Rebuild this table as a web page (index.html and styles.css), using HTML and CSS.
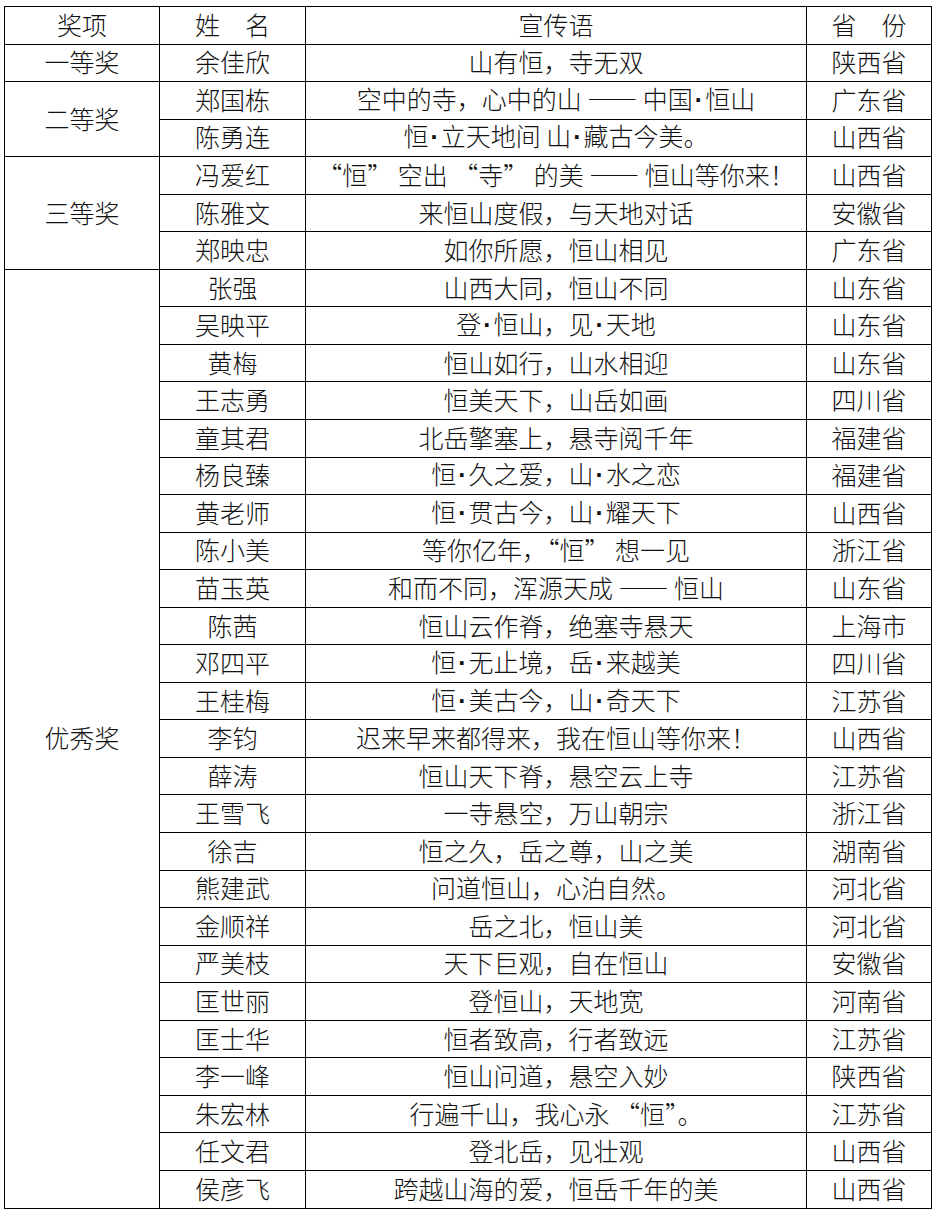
FILE: index.html
```html
<!DOCTYPE html>
<html lang="zh-CN">
<head>
<meta charset="utf-8">
<title>获奖名单</title>
<link rel="stylesheet" href="styles.css">
</head>
<body>
<table class="awards">
  <colgroup>
    <col class="c-award">
    <col class="c-name">
    <col class="c-slogan">
    <col class="c-prov">
  </colgroup>
  <tr><td>奖项</td><td>姓　名</td><td>宣传语</td><td>省　份</td></tr>
  <tr><td>一等奖</td><td>余佳欣</td><td>山有恒，寺无双</td><td>陕西省</td></tr>
  <tr><td rowspan="2">二等奖</td><td>郑国栋</td><td>空中的寺，心中的山 —— 中国<span class="dot">·</span>恒山</td><td>广东省</td></tr>
  <tr><td>陈勇连</td><td>恒<span class="dot">·</span>立天地间 山<span class="dot">·</span>藏古今美。</td><td>山西省</td></tr>
  <tr><td rowspan="3">三等奖</td><td>冯爱红</td><td>“恒” 空出 “寺” 的美 —— 恒山等你来！</td><td>山西省</td></tr>
  <tr><td>陈雅文</td><td>来恒山度假，与天地对话</td><td>安徽省</td></tr>
  <tr><td>郑映忠</td><td>如你所愿，恒山相见</td><td>广东省</td></tr>
  <tr><td rowspan="25">优秀奖</td><td>张强</td><td>山西大同，恒山不同</td><td>山东省</td></tr>
  <tr><td>吴映平</td><td>登<span class="dot">·</span>恒山，见<span class="dot">·</span>天地</td><td>山东省</td></tr>
  <tr><td>黄梅</td><td>恒山如行，山水相迎</td><td>山东省</td></tr>
  <tr><td>王志勇</td><td>恒美天下，山岳如画</td><td>四川省</td></tr>
  <tr><td>童其君</td><td>北岳擎塞上，悬寺阅千年</td><td>福建省</td></tr>
  <tr><td>杨良臻</td><td>恒<span class="dot">·</span>久之爱，山<span class="dot">·</span>水之恋</td><td>福建省</td></tr>
  <tr><td>黄老师</td><td>恒<span class="dot">·</span>贯古今，山<span class="dot">·</span>耀天下</td><td>山西省</td></tr>
  <tr><td>陈小美</td><td>等你亿年，“恒” 想一见</td><td>浙江省</td></tr>
  <tr><td>苗玉英</td><td>和而不同，浑源天成 —— 恒山</td><td>山东省</td></tr>
  <tr><td>陈茜</td><td>恒山云作脊，绝塞寺悬天</td><td>上海市</td></tr>
  <tr><td>邓四平</td><td>恒<span class="dot">·</span>无止境，岳<span class="dot">·</span>来越美</td><td>四川省</td></tr>
  <tr><td>王桂梅</td><td>恒<span class="dot">·</span>美古今，山<span class="dot">·</span>奇天下</td><td>江苏省</td></tr>
  <tr><td>李钧</td><td>迟来早来都得来，我在恒山等你来！</td><td>山西省</td></tr>
  <tr><td>薛涛</td><td>恒山天下脊，悬空云上寺</td><td>江苏省</td></tr>
  <tr><td>王雪飞</td><td>一寺悬空，万山朝宗</td><td>浙江省</td></tr>
  <tr><td>徐吉</td><td>恒之久，岳之尊，山之美</td><td>湖南省</td></tr>
  <tr><td>熊建武</td><td>问道恒山，心泊自然。</td><td>河北省</td></tr>
  <tr><td>金顺祥</td><td>岳之北，恒山美</td><td>河北省</td></tr>
  <tr><td>严美枝</td><td>天下巨观，自在恒山</td><td>安徽省</td></tr>
  <tr><td>匡世丽</td><td>登恒山，天地宽</td><td>河南省</td></tr>
  <tr><td>匡士华</td><td>恒者致高，行者致远</td><td>江苏省</td></tr>
  <tr><td>李一峰</td><td>恒山问道，悬空入妙</td><td>陕西省</td></tr>
  <tr><td>朱宏林</td><td>行遍千山，我心永 “恒”。</td><td>江苏省</td></tr>
  <tr><td>任文君</td><td>登北岳，见壮观</td><td>山西省</td></tr>
  <tr><td>侯彦飞</td><td>跨越山海的爱，恒岳千年的美</td><td>山西省</td></tr>
</table>
</body>
</html>
```

FILE: styles.css
```css
html, body {
  margin: 0;
  padding: 0;
  background: #ffffff;
}

body {
  padding: 6px 0 0 4px;
}

.awards {
  border-collapse: collapse;
  table-layout: fixed;
  width: 927px;
  font-family: "Noto Sans CJK SC", "Noto Sans", sans-serif;
  font-weight: 300;
  font-size: 25px;
  color: #111111;
}

.c-award { width: 155px; }
.c-name { width: 146px; }
.c-slogan { width: 501px; }
.c-prov { width: 125px; }

.awards tr {
  height: 37.56px;
}

.awards td {
  border: 1px solid #000000;
  padding: 0 0 3px 0;
  text-align: center;
  vertical-align: middle;
  line-height: 30px;
  white-space: nowrap;
}

.dot {
  font-family: "Liberation Sans", sans-serif;
  font-weight: 700;
  padding: 0 2px;
}
```
